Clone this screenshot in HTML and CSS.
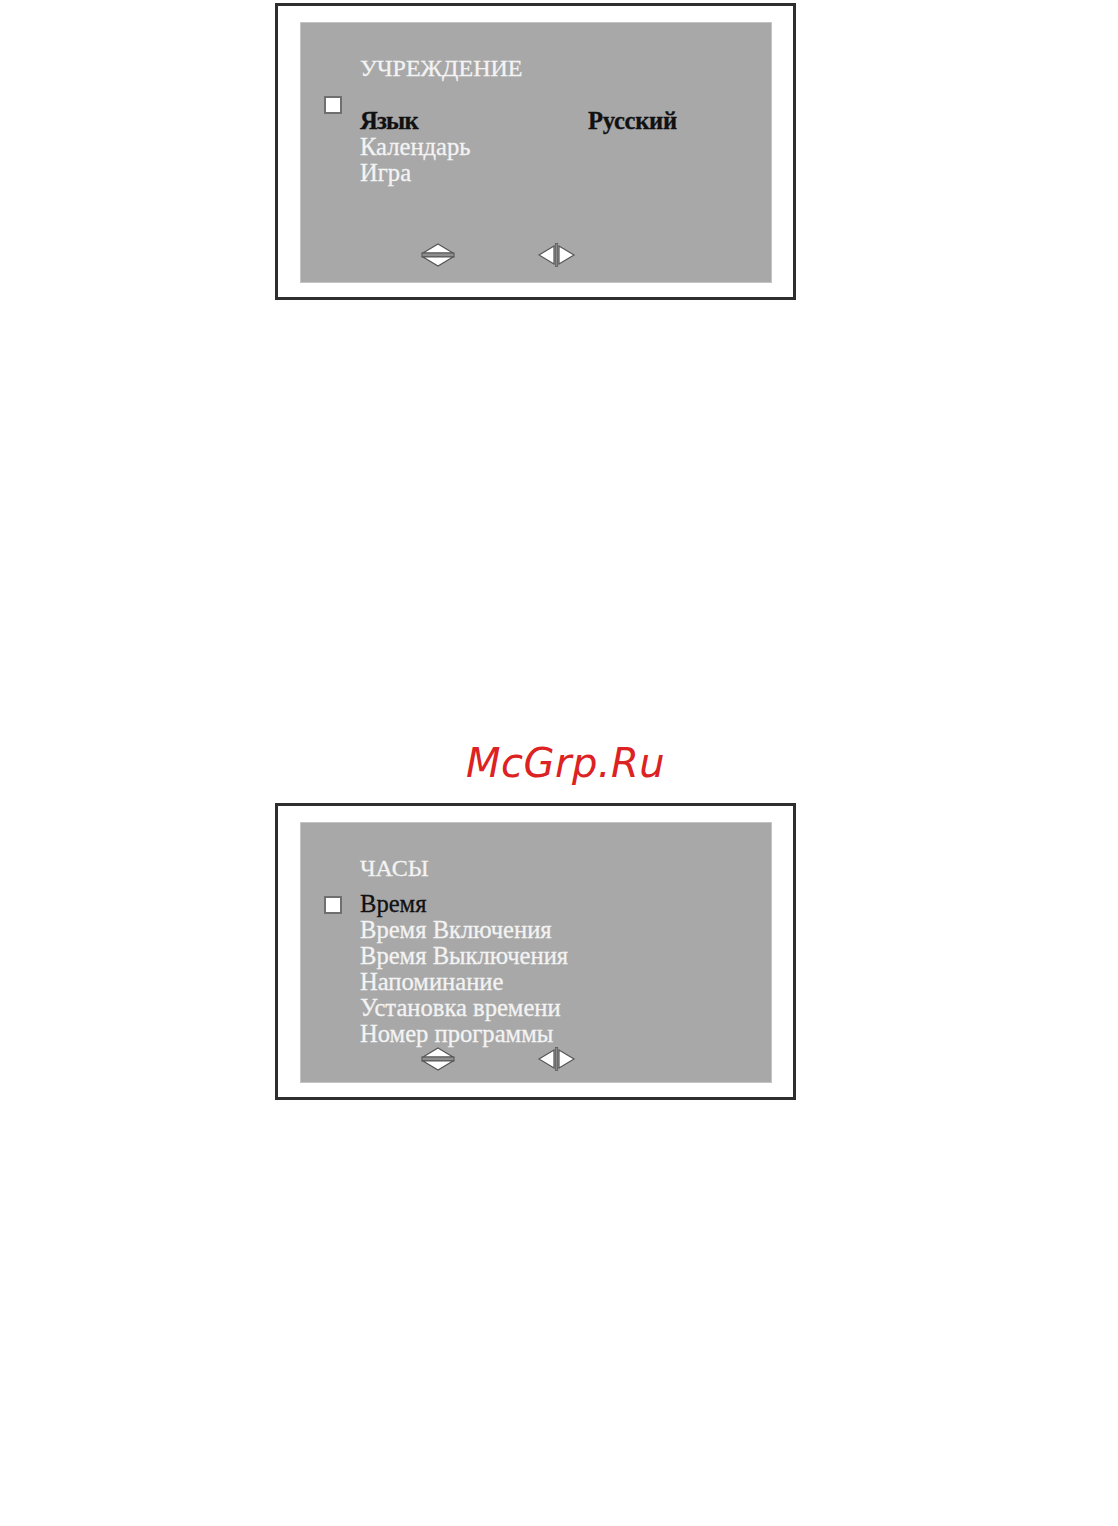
FILE: index.html
```html
<!DOCTYPE html>
<html lang="ru">
<head>
<meta charset="utf-8">
<title>Меню</title>
<link rel="stylesheet" href="styles.css">
</head>
<body>
<section class="panel panel--first">
  <div class="screen">
    <div class="title">УЧРЕЖДЕНИЕ</div>
    <div class="menu">
      <span class="check"></span>
      <div class="item item--selected item--low"><span class="name bold">Язык</span><span class="value">Русский</span></div>
      <span></span>
      <div class="item"><span class="name">Календарь</span></div>
      <span></span>
      <div class="item"><span class="name">Игра</span></div>
    </div>
    <div class="nav">
      <svg class="ud" width="34" height="24" viewBox="0 0 34 24"><polygon points="17,1 32,10 2,10" fill="#fff" stroke="#555" stroke-width="1.2"/><rect x="1" y="10" width="32" height="4" fill="#8e8e8e" stroke="#555" stroke-width="1"/><polygon points="2,14 32,14 17,23" fill="#fff" stroke="#555" stroke-width="1.2"/></svg>
      <svg class="lr" width="38" height="24" viewBox="0 0 38 24"><polygon points="1,12 16,3 16,21" fill="#fff" stroke="#555" stroke-width="1.2"/><rect x="17.3" y="0.5" width="2.4" height="23" fill="#8a8a8a" stroke="#555" stroke-width="0.7"/><polygon points="21,3 21,21 36,12" fill="#fff" stroke="#555" stroke-width="1.2"/></svg>
    </div>
  </div>
</section>

<div class="logo">McGrp.Ru</div>

<section class="panel panel--second">
  <div class="screen">
    <div class="title">ЧАСЫ</div>
    <div class="menu">
      <span class="check"></span>
      <div class="item item--selected"><span class="name">Время</span></div>
      <span></span>
      <div class="item"><span class="name">Время Включения</span></div>
      <span></span>
      <div class="item"><span class="name">Время Выключения</span></div>
      <span></span>
      <div class="item"><span class="name">Напоминание</span></div>
      <span></span>
      <div class="item"><span class="name">Установка времени</span></div>
      <span></span>
      <div class="item"><span class="name">Номер программы</span></div>
    </div>
    <div class="nav">
      <svg class="ud" width="34" height="24" viewBox="0 0 34 24"><polygon points="17,1 32,10 2,10" fill="#fff" stroke="#555" stroke-width="1.2"/><rect x="1" y="10" width="32" height="4" fill="#8e8e8e" stroke="#555" stroke-width="1"/><polygon points="2,14 32,14 17,23" fill="#fff" stroke="#555" stroke-width="1.2"/></svg>
      <svg class="lr" width="38" height="24" viewBox="0 0 38 24"><polygon points="1,12 16,3 16,21" fill="#fff" stroke="#555" stroke-width="1.2"/><rect x="17.3" y="0.5" width="2.4" height="23" fill="#8a8a8a" stroke="#555" stroke-width="0.7"/><polygon points="21,3 21,21 36,12" fill="#fff" stroke="#555" stroke-width="1.2"/></svg>
    </div>
  </div>
</section>
</body>
</html>
```

FILE: styles.css
```css
html, body {
  margin: 0;
  padding: 0;
  background: #fff;
}

body {
  width: 1118px;
  font-family: "Liberation Serif", "Times New Roman", serif;
}

.panel {
  box-sizing: border-box;
  width: 521px;
  height: 297px;
  margin-left: 275px;
  border: 3px solid #2e2e2e;
  padding: 17px 22px 15px 23px;
  background: #fff;
}

.panel--first {
  margin-top: 3px;
}

.panel--second {
  margin-top: 17px;
}

.screen {
  box-sizing: border-box;
  height: 100%;
  background: #a8a8a8;
  box-shadow: 0 0 0 1px #c4c4c4;
  display: flex;
  flex-direction: column;
  padding: 32px 0 15px 23px;
}

.title {
  margin-left: 36px;
  font-size: 24px;
  line-height: 26px;
  color: #f3f3f3;
  -webkit-text-stroke: 0.3px currentColor;
}

.menu {
  margin-top: 10px;
  display: grid;
  grid-template-columns: 18px 1fr;
  column-gap: 18px;
  align-items: start;
}

.check {
  box-sizing: border-box;
  width: 18px;
  height: 18px;
  margin-top: 5px;
  background: #fff;
  border: 2px solid #6f6f6f;
}

.item {
  display: grid;
  grid-template-columns: 228px auto;
  font-size: 24.6px;
  line-height: 26px;
  color: #f3f3f3;
  white-space: nowrap;
  -webkit-text-stroke: 0.3px currentColor;
}

.item--low {
  padding-top: 17px;
}

.item--selected {
  color: #111;
}

.bold {
  font-weight: bold;
  letter-spacing: -0.8px;
}

.value {
  font-weight: bold;
  letter-spacing: -0.3px;
}

.nav {
  margin-top: auto;
  padding-left: 97px;
  display: flex;
  align-items: center;
  gap: 83px;
  height: 24px;
}

.nav svg {
  display: block;
}

.logo {
  margin-top: 440px;
  margin-left: 466px;
  font-family: "DejaVu Sans", sans-serif;
  font-style: italic;
  font-size: 40px;
  line-height: 46px;
  color: #dc2222;
  letter-spacing: 0.5px;
}
```
